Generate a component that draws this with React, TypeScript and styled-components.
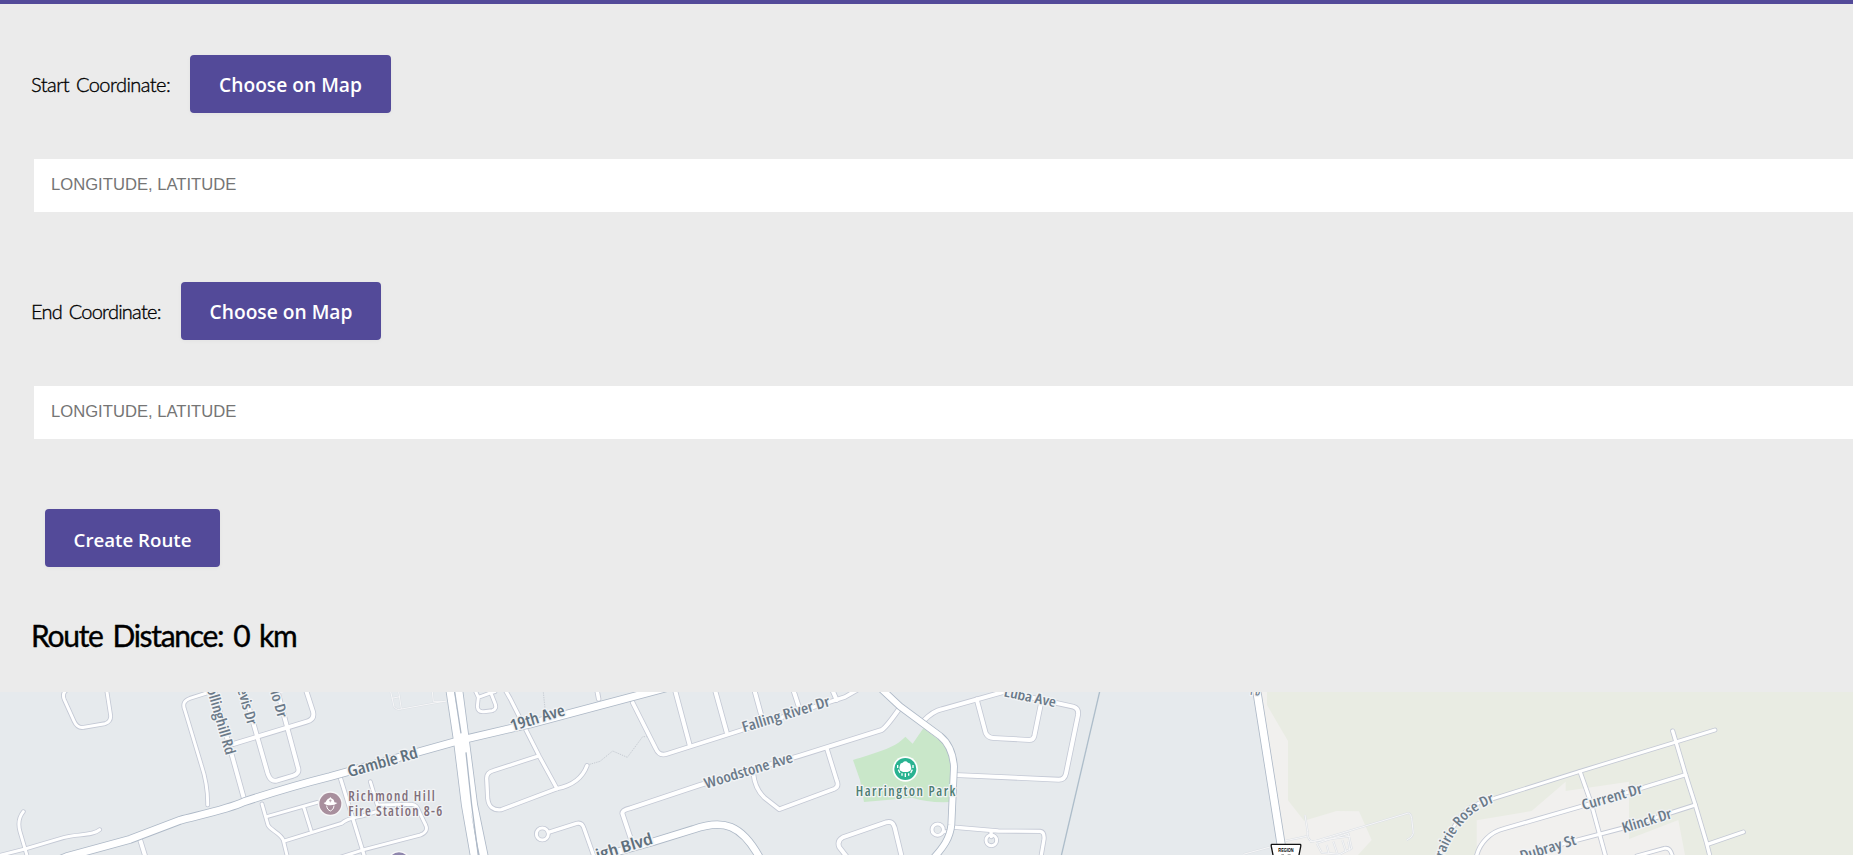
import React from "react";
import styled, { createGlobalStyle } from "styled-components";

const GlobalStyle = createGlobalStyle`
  * { box-sizing: border-box; }
  body {
    margin: 0;
    background: #ebebeb;
    color: #000;
    overflow: hidden;
  }
`;

const Page = styled.main`
  border-top: 4px solid #534a99;
  height: 855px;
  display: flex;
  flex-direction: column;
  overflow: hidden;
`;

const Planner = styled.form`
  display: flex;
  flex-direction: column;
  height: 688px;
  flex: none;
  padding: 51px 0 0 32px;
`;

const Field = styled.section`
  height: 227px;
  flex: none;
`;

const FieldHeader = styled.div`
  display: flex;
  align-items: center;
  height: 58px;
`;

const Label = styled.label<{ $width: number; $tracking: number }>`
  width: ${(p) => p.$width}px;
  flex: none;
  margin-left: -1px;
  padding-right: 1px;
  font: 300 20px/26px Lato, sans-serif;
  letter-spacing: ${(p) => p.$tracking}px;
  word-spacing: 2px;
  -webkit-text-stroke: 0.35px #000;
  white-space: nowrap;
`;

const Button = styled.button<{ $width: number; $size?: number; $drop?: number }>`
  width: ${(p) => p.$width}px;
  height: 58px;
  flex: none;
  border: 0;
  border-radius: 4px;
  padding: ${(p) => p.$drop || 1}px 0 0;
  background: #534a99;
  color: #fff;
  font: 600 ${(p) => p.$size || 19.2}px/27px "Open Sans", sans-serif;
  white-space: nowrap;
  box-shadow: 0 1px 4px rgba(0, 0, 0, 0.04);
`;

const CoordinateInput = styled.input`
  display: block;
  width: 1900px;
  height: 53px;
  margin: 46px 0 0 2px;
  padding: 0 17px 2px;
  border: 0;
  background: #fff;
  font: 16.64px "Liberation Sans", sans-serif;
  &::placeholder { color: #757575; opacity: 1; }
`;

const Actions = styled.div`
  padding-left: 13px;
`;

const Distance = styled.h2`
  margin: 48px 0 0 -1px;
  font: 400 30px/40px Lato, sans-serif;
  letter-spacing: -1.3px;
  word-spacing: 3.5px;
  -webkit-text-stroke: 0.4px #000;
  white-space: nowrap;
`;

const MapView = styled.svg`
  display: block;
  width: 1853px;
  height: 163px;
  flex: none;
  background: #e6eaed;
`;

const MapLabel = styled.text<{ $tone?: string }>`
  font-family: "Open Sans", "Noto Sans", sans-serif;
  font-stretch: 75%;
  font-weight: 550;
  fill: ${(p) => p.$tone || "#6b7a89"};
  stroke: #f1f3f5;
  stroke-width: 8px;
  stroke-linejoin: round;
  paint-order: stroke;
`;

type Road = { x: number; d: string; w?: number };

const W = 0, GAMBLE = 900, WOOD = 1800, PARK = 2520, REGION = 3480, EAST = 4320;

const roads: Road[] = [
  { x: W, d: "M200 15Q185 25 193 44L222 108Q232 131 252 127L315 116Q333 110 332 92L320 15" },
  { x: W, d: "M620 24L570 40Q544 49 554 74L604 240Q624 300 623 360" },
  { x: W, d: "M640 10L733 345", w: 17 },
  { x: W, d: "M700 177L920 110Q945 103 939 80L918 15", w: 17 },
  { x: W, d: "M730 10L803 265Q812 293 833 286L880 272Q900 265 894 248L830 10", w: 17 },
  { x: W, d: "M0 511L75 492L190 458C230 447 280 452 299 434" },
  { x: W, d: "M70 380Q50 405 60 440L82 515" },
  { x: W, d: "M416 450L436 515", w: 17 },
  { x: W, d: "M786 357L804 420C812 437 842 444 850 466L862 515" },
  { x: W, d: "M800 395L952 352M912 369L933 437M853 468L1025 415C1040 400 1065 398 1090 392L1145 375" },
  { x: GAMBLE, d: "M120 275L192 510", w: 15 },
  { x: GAMBLE, d: "M211 290L232 360L335 358Q351 359 357 379L377 420Q386 440 361 450L192 494L120 517" },
  { x: GAMBLE, d: "M525 15L535 37L532 65Q534 82 552 80L577 77Q592 72 585 55L570 17M535 37L568 25L585 20" },
  { x: GAMBLE, d: "M610 5L630 40L718 214L771 311", w: 15 },
  { x: GAMBLE, d: "M712 214L580 257Q560 262 560 280L563 340Q567 378 604 374L771 311Q841 297 861 242", w: 15 },
  { x: GAMBLE, d: "M745 442L830 415Q846 411 852 430L882 515", w: 15 },
  { x: GAMBLE, d: "M745 447A18 18 0 1 1 709 447A18 18 0 1 1 745 447" },
  { x: GAMBLE, d: "M890 10L896 42", w: 16 },
  { x: WOOD, d: "M98 53L167 190Q177 214 200 207L370 153L735 36L790 4", w: 16 },
  { x: WOOD, d: "M225 15L269 180M345 15L380 142M463 15L485 95M580 15L597 67M697 15L710 45", w: 17 },
  { x: WOOD, d: "M97 475L67 385Q67 375 90 370L300 300L600 212L845 135Q859 127 900 68", w: 17 },
  { x: WOOD, d: "M460 265Q464 310 493 338L538 373L704 311Q718 304 710 286L681 192", w: 16 },
  { x: WOOD, d: "M740 515L718 487Q710 468 728 457L858 412Q879 406 884 428L905 515", w: 17 },
  { x: PARK, d: "M250 108Q280 78 305 73L500 18", w: 17 },
  { x: PARK, d: "M410 43L437 144Q444 158 460 159L568 165Q580 165 583 153L602 60", w: 17 },
  { x: PARK, d: "M540 30L700 65Q717 70 714 90L678 265Q674 285 655 284L345 270", w: 17 },
  { x: PARK, d: "M335 426L475 438L600 439Q614 441 612 463L603 515M453 441L454 455", w: 15 },
  { x: PARK, d: "M310 434A17 17 0 1 1 276 434A17 17 0 1 1 310 434M310 440L325 440M470 466A16 16 0 1 1 438 466A16 16 0 1 1 470 466" },
  { x: EAST, d: "M150 344L420 259L708 171L825 135", w: 14 },
  { x: EAST, d: "M698 138L708 171L737 269L766 360L800 475L810 515", w: 15 },
  { x: EAST, d: "M420 260L452 350L497 515", w: 15 },
  { x: EAST, d: "M109 515C118 475 150 441 192 431L445 358L737 269", w: 15 },
  { x: EAST, d: "M360 479L550 429L766 360M802 478L910 441", w: 15 },
  { x: EAST, d: "M590 513L673 490Q690 486 697 512", w: 14 },
  { x: EAST, d: "M0 510Q20 460 50 410Q80 360 150 344", w: 13 },
];

const arteries: Road[] = [
  { x: W, d: "M165 530L200 515L390 463L540 406C580 394 680 375 733 350C870 305 930 290 990 275L1380 166L1590 117L2000 8", w: 26 },
  { x: GAMBLE, d: "M449 5L473 165L497 360L525 520M474 5L495 165L520 360L553 520", w: 28 },
  { x: WOOD, d: "M0 515L160 470L280 433C370 401 425 418 480 520", w: 25 },
  { x: WOOD, d: "M842 10L900 64L1020 153C1052 179 1060 217 1062 245L1054 420C1050 460 1029 488 1000 520", w: 23 },
  { x: REGION, d: "M290 15L370 520", w: 27 },
];

const trails: Road[] = [
  { x: GAMBLE, d: "M272 20L282 65Q290 77 305 72L437 48M275 40L300 35M296 20L304 72M397 20L400 50L437 50" },
  { x: REGION, d: "M435 390L443 440Q440 466 460 470L745 384Q754 386 755 400L760 445Q757 458 740 465M470 475L565 445L575 490L540 508L485 503L470 475M500 480L507 506M520 470L532 506M547 466L558 500M565 470L570 498M250 508L330 486M378 467L440 454M450 470L570 454" },
];

const Roads = ({ items, major = false }: { items: Road[]; major?: boolean }) => (
  <g fill="none" strokeLinecap="round" strokeLinejoin="round">
    {items.map((r, i) => (
      <path key={`edge-${i}`} d={r.d} transform={`translate(${r.x})`} stroke={major ? "#aeb9c7" : "#c4c9d5"} strokeWidth={r.w || 14} />
    ))}
    {items.map((r, i) => (
      <path key={`surface-${i}`} d={r.d} transform={`translate(${r.x})`} stroke="#fff" strokeWidth={(r.w || 14) - 5} />
    ))}
  </g>
);

type Place = { x: number; y: number; text: string; length: number; angle?: number; size?: number; tone?: string; squeeze?: number };

const places: Place[] = [
  { x: 620, y: 12, text: "ollinghill Rd", length: 208, angle: 74 },
  { x: 712, y: 14, text: "evis Dr", length: 112, angle: 74 },
  { x: 811, y: 21, text: "lo Dr", length: 83, angle: 74 },
  { x: 1048, y: 277, text: "Gamble Rd", length: 217, angle: -16, size: 48, tone: "#5f707d" },
  { x: 1536, y: 139, text: "19th Ave", length: 169, angle: -17, size: 48, tone: "#5f707d" },
  { x: 1045, y: 349, text: "Richmond Hill", length: 259, size: 42, tone: "#806e7a", squeeze: 0.96 },
  { x: 1045, y: 393, text: "Fire Station 8-6", length: 282, size: 42, tone: "#806e7a", squeeze: 0.96 },
  { x: 2231, y: 142, text: "Falling River Dr", length: 274, angle: -17 },
  { x: 2118, y: 311, text: "Woodstone Ave", length: 275, angle: -17 },
  { x: 1793, y: 527, text: "igh Blvd", length: 176, angle: -17, size: 48, tone: "#5f707d" },
  { x: 2567, y: 333, text: "Harrington Park", length: 299, size: 42, tone: "#4d7d72", squeeze: 0.96 },
  { x: 3010, y: 34, text: "Luba Ave", length: 158, angle: 12, size: 42 },
  { x: 3750, y: 29, text: "r D", length: 30, angle: 8, size: 34 },
  { x: 4750, y: 376, text: "Current Dr", length: 187, angle: -16 },
  { x: 4871, y: 444, text: "Klinck Dr", length: 154, angle: -17 },
  { x: 4565, y: 529, text: "Dubray St", length: 173, angle: -17 },
];

const RouteMap = () => (
  <MapView viewBox="0 21 5559 489" preserveAspectRatio="none" aria-label="Route map">
    <path d="M3765 0H5559V510H3846Z" fill="#f1f0ee" />
    <path d="M3801 0H5559V510H4074L4115 465L4077 379L4010 378L3912 407L3864 346V168L3801 60Z" fill="#e9ece3" />
    <path d="M4430 510V406L4595 378L4697 290V318L4887 290V462L5035 405L5055 510Z" fill="#f1f0ee" />
    <path d="M2559 225C2620 205 2685 190 2716 155L2738 176L2770 130L2830 175Q2851 200 2850 240V351Q2785 354 2737 338L2592 351L2580 285Z" fill="#c9e7c9" />
    <g fill="none" strokeLinejoin="round">
      {trails.map((t, i) => (
        <g key={i} transform={`translate(${t.x})`}>
          <path d={t.d} stroke="#dce0e5" strokeWidth={6} />
          <path d={t.d} stroke="#f6f6f7" strokeWidth={3} />
        </g>
      ))}
      <path d="M1630 22L1637 90M1755 242L1800 229L1838 198L1882 217L1928 155H1940M1865 37L1900 45" stroke="#c7ccd3" strokeWidth="3" strokeDasharray="4 3" />
      <path d="M3299 20L3184 512" stroke="#adbdca" strokeWidth="4" />
    </g>
    <Roads items={roads} />
    <Roads items={arteries} major />
    <path d="M1364 21L1383 145M1398 202L1415 360L1435 512" fill="none" stroke="#aeb9c7" strokeWidth="4" />
    {places.map((p) => {
      const squeeze = p.squeeze || 1;
      return (
        <MapLabel
          key={p.text}
          $tone={p.tone}
          fontSize={p.size || 44}
          textLength={p.length / squeeze}
          lengthAdjust={p.squeeze ? "spacing" : "spacingAndGlyphs"}
          transform={`translate(${p.x} ${p.y}) rotate(${p.angle || 0}) scale(${squeeze} 1)`}
        >
          {p.text}
        </MapLabel>
      );
    })}
    <path id="prairie-curve" d="M4325 540C4340 480 4373 424 4415 389Q4450 362 4505 344" fill="none" />
    <MapLabel fontSize="43">
      <textPath href="#prairie-curve" textLength="258" lengthAdjust="spacingAndGlyphs">Prairie Rose Dr</textPath>
    </MapLabel>
    <g transform="translate(991 356)">
      <circle r="37" fill="#f7f7f8" />
      <circle r="33" fill="#a88f9d" />
      <path d="M-20-2Q-13-3-12-9Q-8-15-3-16L0-20L3-16Q12-13 12-4Q15-3 21-2Q14 5 0 5T-20-2Z" fill="#fff" />
      <path d="M-11 6C-10 17-5 19 0 22C5 19 10 17 11 6" fill="none" stroke="#fff" strokeWidth="3" />
      <path d="M0-13V-4M-4-9H4" stroke="#a88f9d" strokeWidth="2" />
    </g>
    <g transform="translate(2716 252)">
      <circle r="38" fill="#fff" />
      <circle r="33" fill="#2ab391" />
      <path d="M-7 9L-15 5Q-20-3-16-10Q-17-18-8-19Q0-27 8-19Q17-18 16-10Q20-2 15 5L7 9Z" fill="#fff" />
      <path d="M-23-12V-3M23-12V-3M-21 2L-16 12M21 2L16 12M-10 13V20M0 13V24M10 13V20" stroke="#fff" strokeWidth="4" />
    </g>
    <circle cx="1197" cy="534" r="36" fill="#f7f7f8" />
    <circle cx="1197" cy="534" r="32" fill="#8f87ad" />
    <g transform="translate(3858 510)">
      <path d="M-43-32H43Q45-32 44-25L34 25H-34L-44-25Q-45-32-43-32Z" fill="#fff" stroke="#111" strokeWidth="4" />
      <text y="-10" textAnchor="middle" fontSize="14" fontWeight="700" fontFamily="Liberation Sans, sans-serif" textLength="46" lengthAdjust="spacingAndGlyphs">REGION</text>
      <path d="M-14 0H-6M5 0H14" stroke="#555" strokeWidth="3" />
    </g>
  </MapView>
);

type FieldProps = { id: string; label: string; labelWidth: number; tracking: number; buttonWidth: number };

const CoordinateField = ({ id, label, labelWidth, tracking, buttonWidth }: FieldProps) => (
  <Field>
    <FieldHeader>
      <Label htmlFor={id} $width={labelWidth} $tracking={tracking}>{label}</Label>
      <Button type="button" $width={buttonWidth}>Choose on Map</Button>
    </FieldHeader>
    <CoordinateInput id={id} placeholder="LONGITUDE, LATITUDE" />
  </Field>
);

export default function App() {
  return (
    <>
      <GlobalStyle />
      <Page>
        <Planner onSubmit={(event) => event.preventDefault()}>
          <CoordinateField id="start" label="Start Coordinate:" labelWidth={159} tracking={-0.54} buttonWidth={201} />
          <CoordinateField id="end" label="End Coordinate:" labelWidth={150} tracking={-0.75} buttonWidth={200} />
          <Actions>
            <Button $width={175} $size={18.7} $drop={3}>Create Route</Button>
          </Actions>
          <Distance>Route Distance: 0 km</Distance>
        </Planner>
        <RouteMap />
      </Page>
    </>
  );
}
